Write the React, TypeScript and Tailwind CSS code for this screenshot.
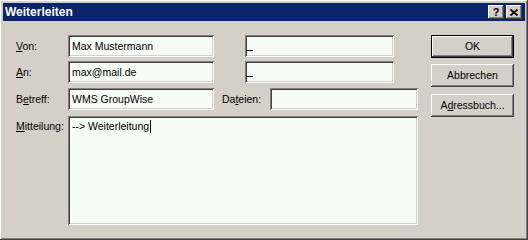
import React from 'react'

const raised =
  'shadow-[inset_-1px_-1px_0_#404040,inset_1px_1px_0_#ffffff,inset_-2px_-2px_0_#808080,inset_2px_2px_0_#d4d0c8]'
const sunken =
  'shadow-[inset_1px_1px_0_#808080,inset_-1px_-1px_0_#ffffff,inset_2px_2px_0_#404040,inset_-2px_-2px_0_#d4d0c8]'

function Field(props: { w: string; children?: React.ReactNode; mark?: boolean }) {
  return (
    <div className={`relative flex h-[22px] items-center bg-[#f7fbf5] pl-[4px] text-black ${sunken} ${props.w}`}>
      {props.children}
      {props.mark && <span className="absolute left-[1px] top-[15px] h-px w-[7px] bg-black" />}
    </div>
  )
}

function Label(props: { children: React.ReactNode; w?: string }) {
  return <div className={`flex items-center text-black ${props.w ?? 'w-[52px]'}`}>{props.children}</div>
}

function Button(props: { children: React.ReactNode; primary?: boolean; className?: string }) {
  return (
    <div className={`h-[23px] w-[83px] ${props.primary ? 'border border-black' : ''} ${props.className ?? ''}`}>
      <div className={`flex h-full w-full items-center justify-center bg-[#d4d0c8] text-black ${raised}`}>
        {props.children}
      </div>
    </div>
  )
}

export default function App() {
  return (
    <div
      className={`flex h-[240px] w-[528px] flex-col bg-[#d4d0c8] p-[3px] text-[10.5px] leading-[13px] ${raised}`}
      style={{ fontFamily: '"Liberation Sans", Arial, sans-serif' }}
    >
      {/* caption */}
      <div className="flex h-[18px] items-center bg-[#0a246a] pl-[2px] pr-[3px]">
        <span className="text-[12px] font-bold text-white">Weiterleiten</span>
        <div className="ml-auto flex gap-[2px]">
          <div className={`flex h-[14px] w-[16px] items-center justify-center bg-[#d4d0c8] ${raised}`}>
            <span className="text-[11px] font-bold leading-none text-black">?</span>
          </div>
          <div className={`flex h-[14px] w-[16px] items-center justify-center bg-[#d4d0c8] ${raised}`}>
            <svg width="8" height="7" viewBox="0 0 8 7">
              <path d="M0.5 0.5 L7.5 6.5 M7.5 0.5 L0.5 6.5" stroke="#000" strokeWidth="1.7" />
            </svg>
          </div>
        </div>
      </div>

      <div className="flex pl-[13px] pt-[14px]">
        <div className="flex w-[402px] flex-col">
          <div className="flex h-[22px]">
            <Label>
              <span><span className="underline">V</span>on:</span>
            </Label>
            <Field w="w-[146px]">Max Mustermann</Field>
            <div className="w-[31px]" />
            <Field w="w-[149px]" mark />
          </div>

          <div className="mt-[4px] flex h-[22px]">
            <Label>
              <span><span className="underline">A</span>n:</span>
            </Label>
            <Field w="w-[146px]">max@mail.de</Field>
            <div className="w-[31px]" />
            <Field w="w-[149px]" mark />
          </div>

          <div className="mt-[5px] flex h-[22px]">
            <Label>
              <span>B<span className="underline">e</span>treff:</span>
            </Label>
            <Field w="w-[146px]">WMS GroupWise</Field>
            <div className="w-[8px]" />
            <Label w="w-[48px]">
              <span>Da<span className="underline">t</span>eien:</span>
            </Label>
            <Field w="w-[148px]" />
          </div>

          <div className="mt-[6px] flex">
            <div className="w-[52px] pt-[4px] text-black">
              <span className="underline">M</span>itteilung:
            </div>
            <div className={`h-[109px] w-[350px] bg-[#f7fbf5] pl-[4px] pt-[4px] text-black ${sunken}`}>
              <span>--&gt; Weiterleitung</span>
              <span className="ml-px inline-block h-[13px] w-px bg-black align-top" />
            </div>
          </div>
        </div>

        <div className="ml-[13px] flex flex-col">
          <Button primary>OK</Button>
          <Button className="mt-[6px]">Abbrechen</Button>
          <Button className="mt-[7px]">
            <span>A<span className="underline">d</span>ressbuch...</span>
          </Button>
        </div>
      </div>
    </div>
  )
}
